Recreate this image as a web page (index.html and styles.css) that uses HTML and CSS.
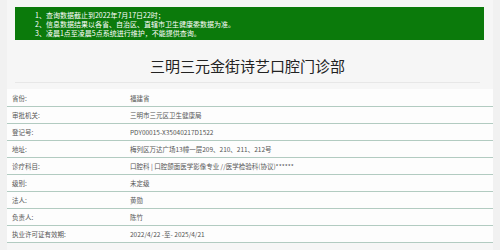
FILE: index.html
```html
<!DOCTYPE html>
<html lang="zh">
<head>
<meta charset="utf-8">
<link rel="stylesheet" href="styles.css">
</head>
<body>
<div class="page">
  <div class="notice">
    <div>1、查询数据截止到2022年7月17日22时；</div>
    <div>2、信息数据结果以各省、自治区、直辖市卫生健康委数据为准。</div>
    <div>3、凌晨1点至凌晨5点系统进行维护，不能提供查询。</div>
  </div>
  <h1 class="title">三明三元金街诗艺口腔门诊部</h1>
  <div class="table">
    <div class="row first"><div class="label">省份:</div><div class="value">福建省</div></div>
    <div class="row"><div class="label">审批机关:</div><div class="value">三明市三元区卫生健康局</div></div>
    <div class="row"><div class="label">登记号:</div><div class="value">PDY00015-X35040217D1522</div></div>
    <div class="row"><div class="label">地址:</div><div class="value">梅列区万达广场13幢一层209、210、211、212号</div></div>
    <div class="row"><div class="label">诊疗科目:</div><div class="value">口腔科 | 口腔颌面医学影像专业 //医学检验科(协议)******</div></div>
    <div class="row"><div class="label">级别:</div><div class="value">未定级</div></div>
    <div class="row"><div class="label">法人:</div><div class="value">黄勋</div></div>
    <div class="row"><div class="label">负责人:</div><div class="value">陈竹</div></div>
    <div class="row"><div class="label">执业许可证有效期:</div><div class="value">2022/4/22 -至- 2025/4/21</div></div>
  </div>
</div>
</body>
</html>
```
FILE: styles.css
```css
html, body {
  margin: 0;
  padding: 0;
}
body {
  background: #f1f1f1;
  font-family: "Noto Sans CJK SC", "Noto Sans", sans-serif;
  color: #555;
}
.page {
  margin: 0 7px;
  padding-top: 7px;
  background: #f6f6f6;
  height: 250px;
}
.notice {
  margin: 0 9px 0 8px;
  height: 33px;
  box-sizing: border-box;
  background: #0b7a0b;
  color: #fff;
  font-size: 7px;
  line-height: 9px;
  padding: 4px 0 0 20px;
}
.title {
  margin: 16px 13px 0 8px;
  padding-bottom: 6px;
  font-size: 15px;
  line-height: 20px;
  font-weight: 400;
  color: #222;
  text-align: center;
  border-bottom: 1px solid #e7e7e7;
}
.table {
  margin-top: 6px;
  background: #fdfdfd;
}
.row {
  display: flex;
  height: 16px;
  border-bottom: 1px solid #b2cbc1;
  font-size: 6.5px;
  align-items: center;
}
.row.first {
  height: 17px;
}
.label {
  width: 118px;
  padding-left: 5px;
  color: #555;
}
.value {
  color: #555;
}
```
